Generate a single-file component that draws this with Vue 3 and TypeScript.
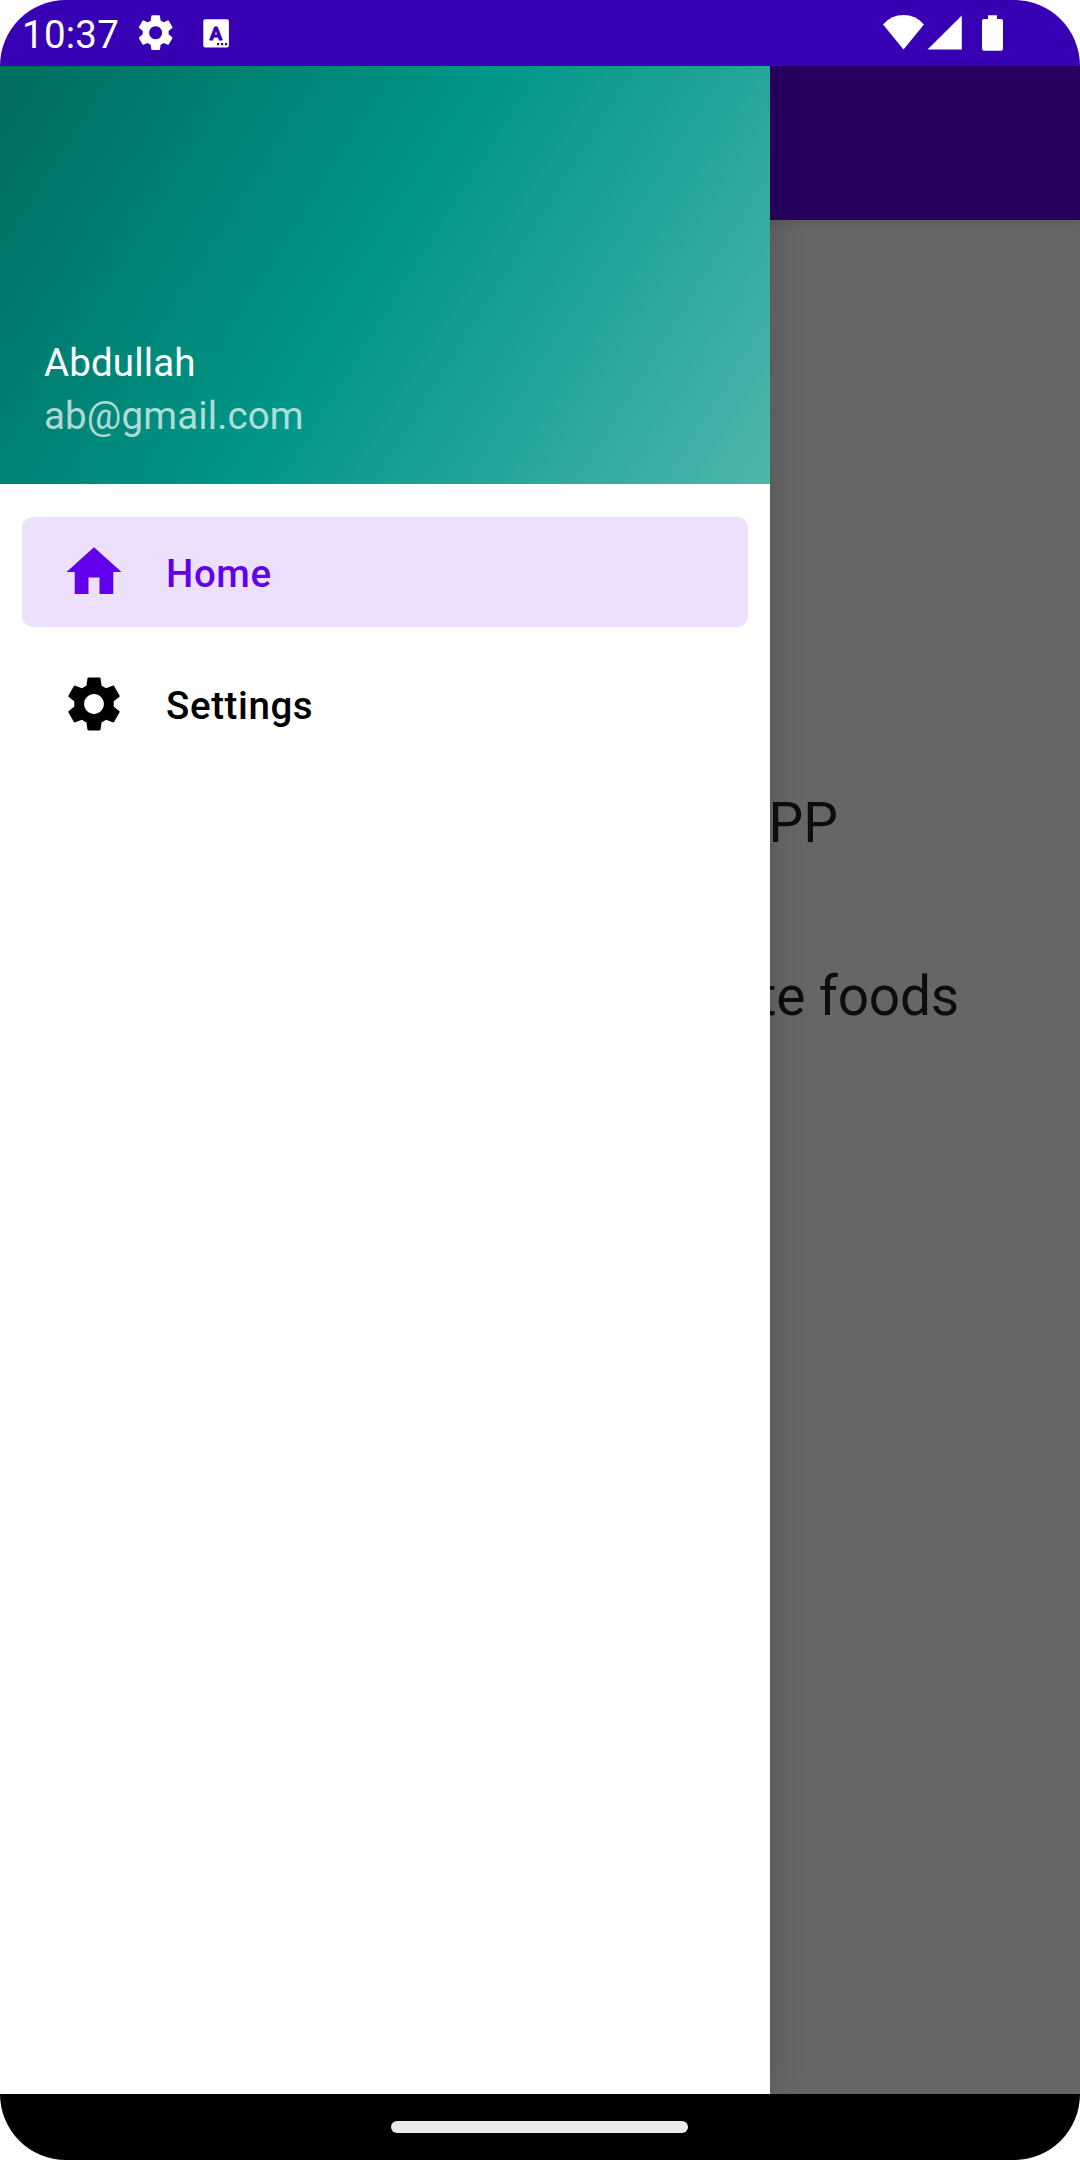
<script setup lang="ts">
import { ref } from 'vue'

interface NavItem {
  id: string
  label: string
  path: string
}

const gear =
  'M19.14,12.94c0.04-0.3,0.06-0.61,0.06-0.94c0-0.32-0.02-0.64-0.07-0.94l2.03-1.58c0.18-0.14,0.23-0.41,0.12-0.61l-1.92-3.32c-0.12-0.22-0.37-0.29-0.59-0.22l-2.39,0.96c-0.5-0.38-1.03-0.7-1.62-0.94L14.4,2.81c-0.04-0.24-0.24-0.41-0.48-0.41h-3.84c-0.24,0-0.43,0.17-0.47,0.41L9.25,5.35C8.66,5.59,8.12,5.92,7.63,6.29L5.24,5.33c-0.22-0.08-0.47,0-0.59,0.22L2.74,8.87C2.62,9.08,2.66,9.34,2.86,9.48l2.03,1.58C4.84,11.36,4.8,11.69,4.8,12s0.02,0.64,0.07,0.94l-2.03,1.58c-0.18,0.14-0.23,0.41-0.12,0.61l1.92,3.32c0.12,0.22,0.37,0.29,0.59,0.22l2.39-0.96c0.5,0.38,1.03,0.7,1.62,0.94l0.36,2.54c0.05,0.24,0.24,0.41,0.48,0.41h3.84c0.24,0,0.44-0.17,0.47-0.41l0.36-2.54c0.59-0.24,1.13-0.56,1.62-0.94l2.39,0.96c0.22,0.08,0.47,0,0.59-0.22l1.92-3.32c0.12-0.22,0.07-0.47-0.12-0.61L19.14,12.94zM12,15.6c-1.98,0-3.6-1.62-3.6-3.6s1.62-3.6,3.6-3.6s3.6,1.62,3.6,3.6S13.98,15.6,12,15.6z'

const items: NavItem[] = [
  { id: 'home', label: 'Home', path: 'M10,20v-6h4v6h5v-8h3L12,3 2,12h3v8z' },
  { id: 'settings', label: 'Settings', path: gear },
]

const selected = ref('home')
</script>

<template>
  <div class="phone">
    <header class="status">
      <span class="clock">10:37</span>
      <svg class="status-gear" viewBox="0 0 24 24"><path :d="gear" fill="#fff" /></svg>
      <svg class="status-font" viewBox="0 0 26 29">
        <rect x="0.3" y="0.2" width="25.6" height="28.2" rx="2" fill="#fff" />
        <text class="badge" x="13" y="21" text-anchor="middle">A</text>
        <path d="M14 24h2.2v2.2H14zM18 24h2.2v2.2H18zM22 24h2.2v2.2H22z" fill="#3700b3" />
      </svg>
      <svg class="system" viewBox="880 0 130 66">
        <path d="M883 24.4Q891.5 15.1 903.5 15.1T924 24.4L903.5 49.5z" fill="#fff" />
        <path d="M927.5 49.6L961.8 15.4V49.6z" fill="#fff" />
        <path d="M988 15.2h9v3.9h4q2 0 2 2v27.6q0 2-2 2h-17q-2 0-2-2V21.1q0-2 2-2h4z" fill="#fff" />
      </svg>
    </header>

    <div class="body">
      <main class="content">
        <div class="appbar"></div>
        <p class="line title">PP</p>
        <p class="line subtitle">te foods</p>
      </main>
      <div class="scrim"></div>
      <aside class="drawer">
        <div class="account">
          <span class="name">Abdullah</span>
          <span class="email">ab@gmail.com</span>
        </div>
        <nav class="menu">
          <a
            v-for="item in items"
            :key="item.id"
            class="item"
            :class="{ active: item.id === selected }"
            @click="selected = item.id"
          >
            <svg class="icon" viewBox="0 0 24 24"><path :d="item.path" fill="currentColor" /></svg>
            <span class="label">{{ item.label }}</span>
          </a>
        </nav>
      </aside>
    </div>

    <footer class="gesture"><span class="handle"></span></footer>
  </div>
</template>

<style>
body {
  background: #fff;
}
</style>

<style scoped>
.phone {
  display: flex;
  flex-direction: column;
  width: 1080px;
  height: 2160px;
  overflow: hidden;
  border-radius: 66px;
  font-family: Roboto, "Liberation Sans", sans-serif;
}
.status {
  display: flex;
  align-items: center;
  flex: none;
  height: 66px;
  padding-left: 22px;
  box-sizing: border-box;
  background: #3700b3;
  color: #fff;
}
.clock {
  width: 112px;
  font-size: 38.5px;
  line-height: 46px;
  letter-spacing: 0.25px;
  padding-top: 3px;
}
.status-gear {
  width: 43.3px;
  height: 43.3px;
}
.status-font {
  width: 26px;
  height: 29px;
  margin-left: 25.7px;
}
.badge {
  font: 700 19px Roboto, "Liberation Sans", sans-serif;
  fill: #3700b3;
  stroke: #3700b3;
  stroke-width: 0.8px;
  stroke-linejoin: round;
}
.system {
  width: 130px;
  height: 66px;
  margin-left: auto;
  margin-right: 70px;
}
.body {
  position: relative;
  flex: none;
  height: 2028px;
  overflow: hidden;
}
.content {
  display: flex;
  flex-direction: column;
  height: 100%;
  background: #fff;
}
.appbar {
  flex: none;
  height: 154px;
  background: #6200ee;
  box-shadow: 0 2px 12px rgba(0, 0, 0, 0.12);
}
.line {
  margin: 0;
  font-size: 55px;
  line-height: 64px;
  color: #212121;
  text-align: right;
}
.title {
  margin-top: 571px;
  padding-right: 242px;
}
.subtitle {
  margin-top: 109px;
  padding-right: 121px;
  letter-spacing: -0.2px;
}
.scrim {
  position: absolute;
  inset: 0;
  background: rgba(0, 0, 0, 0.6);
}
.drawer {
  position: absolute;
  top: 0;
  left: 0;
  bottom: 0;
  width: 770px;
  background: #fff;
  box-shadow: 0 0 34px rgba(0, 0, 0, 0.17);
}
.account {
  display: flex;
  flex-direction: column;
  justify-content: flex-end;
  height: 418px;
  padding: 0 44px 46px;
  box-sizing: border-box;
  background: linear-gradient(122.15deg, #00695c, #009688 50%, #4db6ac) 0 100% / 770px 484px;
  font-size: 38.5px;
  line-height: 45px;
  letter-spacing: 0.13px;
}
.name {
  margin-bottom: 8px;
  color: #fff;
}
.email {
  color: rgba(255, 255, 255, 0.7);
}
.menu {
  display: flex;
  flex-direction: column;
  gap: 22px;
  padding: 33px 22px;
}
.item {
  display: flex;
  align-items: center;
  gap: 39px;
  height: 110px;
  padding-left: 39px;
  border-radius: 11px;
  color: #000;
  font-size: 38.5px;
  font-weight: 500;
  letter-spacing: 0.6px;
}
.label {
  padding-top: 2px;
}
.active {
  background: rgba(98, 0, 238, 0.12);
  color: #6200ee;
}
.icon {
  width: 66px;
  height: 66px;
}
.gesture {
  display: flex;
  align-items: flex-start;
  flex: none;
  height: 66px;
  padding: 27px 0 0 391px;
  box-sizing: border-box;
  background: #000;
}
.handle {
  width: 297px;
  height: 12px;
  border-radius: 6px;
  background: #ebebeb;
}
</style>
